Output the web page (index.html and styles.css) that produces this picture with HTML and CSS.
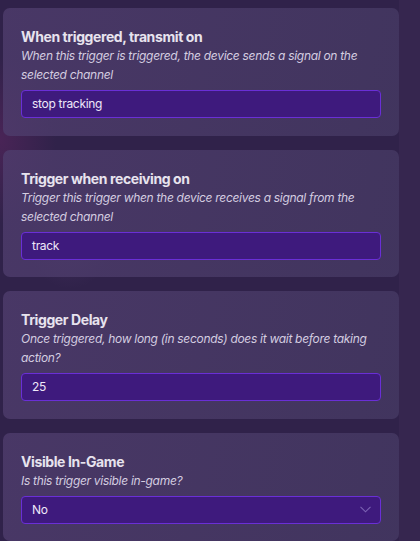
FILE: index.html
```html
<!DOCTYPE html>
<html>
<head>
<meta charset="utf-8">
<link rel="stylesheet" href="styles.css">
</head>
<body>
<div class="page">
  <div class="list">
    <section class="card">
      <div class="title">When triggered, transmit on</div>
      <div class="desc">When this trigger is triggered, the device sends a signal on the selected channel</div>
      <div class="field">stop tracking</div>
    </section>
    <section class="card">
      <div class="title">Trigger when receiving on</div>
      <div class="desc">Trigger this trigger when the device receives a signal from the selected channel</div>
      <div class="field">track</div>
    </section>
    <section class="card">
      <div class="title">Trigger Delay</div>
      <div class="desc">Once triggered, how long (in seconds) does it wait before taking action?</div>
      <div class="field">25</div>
    </section>
    <section class="card">
      <div class="title">Visible In-Game</div>
      <div class="desc">Is this trigger visible in-game?</div>
      <div class="field select">
        <span>No</span>
        <svg class="chev" width="11" height="7" viewBox="0 0 11 7"><path d="M0.5 0.8 L5.5 5.8 L10.5 0.8" fill="none" stroke="#7b62b3" stroke-width="1.1"/></svg>
      </div>
    </section>
  </div>
  <div class="rail"></div>
</div>
</body>
</html>
```
FILE: styles.css
```css
html, body {
  margin: 0;
  padding: 0;
  height: 100%;
  overflow: hidden;
}
body {
  background: #32234a;
  font-family: Inter, "Noto Sans", sans-serif;
}
.page {
  display: flex;
  height: 541px;
  overflow: hidden;
}
.list {
  width: 396px;
  padding: 8px 0 0 3px;
  display: flex;
  flex-direction: column;
  gap: 14px;
  flex-shrink: 0;
  background:
    radial-gradient(ellipse 60px 70px at 70px 240px, rgba(120,90,150,0.18), rgba(0,0,0,0) 70%),
    radial-gradient(ellipse 80px 120px at 0px 140px, rgba(120,40,110,0.35), rgba(0,0,0,0) 70%),
    #30224a;
}
.rail {
  flex: 1;
  background: #36264f;
}
.card {
  background: linear-gradient(100deg, rgba(78,60,108,0.82), rgba(70,58,100,0.78));
  border-radius: 7px;
  padding: 20px 18px 17.5px 18px;
  flex-shrink: 0;
}
.title {
  color: #e7e3ee;
  font-weight: 700;
  font-size: 14px;
  line-height: 18px;
  letter-spacing: -0.4px;
}
.desc {
  color: #d4cde0;
  font-style: italic;
  font-size: 12px;
  line-height: 19px;
  letter-spacing: -0.3px;
  margin-bottom: 6px;
}
.field {
  box-sizing: border-box;
  height: 28px;
  border: 1px solid #6a2fd6;
  border-radius: 4px;
  background: #3e1a7d;
  color: #eee8f9;
  font-size: 12px;
  letter-spacing: -0.3px;
  line-height: 26px;
  padding: 0 10px 0 10px;
  display: flex;
  align-items: center;
  justify-content: space-between;
}
.select {
  padding-right: 9px;
}
.chev {
  display: block;
}
```
